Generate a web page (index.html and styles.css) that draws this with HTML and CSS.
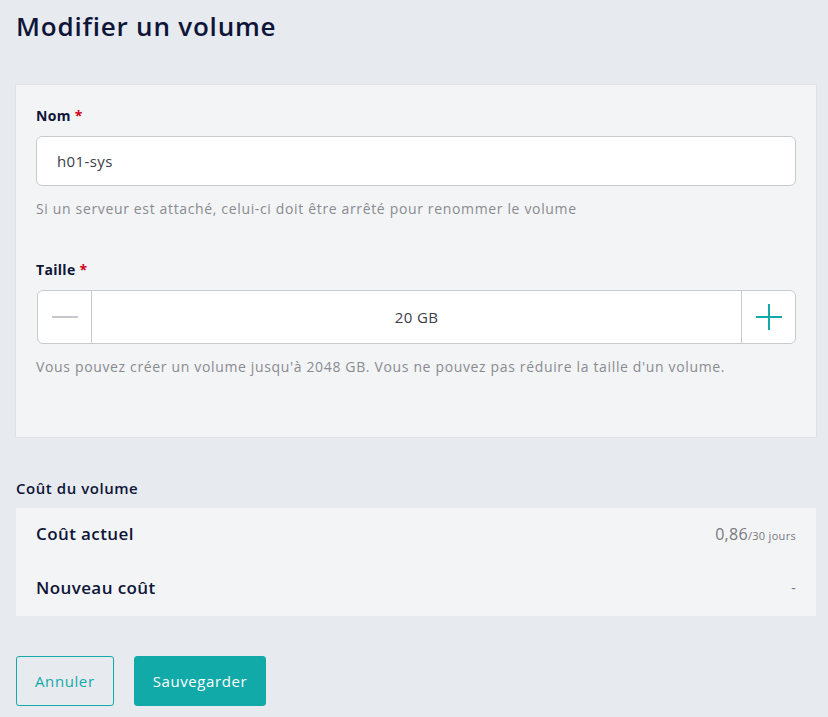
FILE: index.html
```html
<!DOCTYPE html>
<html lang="fr">
<head>
<meta charset="utf-8">
<title>Modifier un volume</title>
<link rel="stylesheet" href="styles.css">
</head>
<body>
<div class="page">
  <h1 class="title">Modifier un volume</h1>
  <section class="card">
    <div class="field">
      <label class="label">Nom <span class="req">*</span></label>
      <div class="input">h01-sys</div>
      <p class="help">Si un serveur est attaché, celui-ci doit être arrêté pour renommer le volume</p>
    </div>
    <div class="field field-size">
      <label class="label">Taille <span class="req">*</span></label>
      <div class="stepper">
        <div class="step minus"><svg width="26" height="2" viewBox="0 0 26 2"><rect width="26" height="2" fill="#c7c8cd"/></svg></div>
        <div class="value">20 GB</div>
        <div class="step plus"><svg width="26" height="26" viewBox="0 0 26 26"><rect x="12" y="0" width="2" height="26" fill="#12aaa9"/><rect x="0" y="12" width="26" height="2" fill="#12aaa9"/></svg></div>
      </div>
      <p class="help">Vous pouvez créer un volume jusqu'à 2048 GB. Vous ne pouvez pas réduire la taille d'un volume.</p>
    </div>
  </section>
  <h2 class="subtitle">Coût du volume</h2>
  <section class="costs">
    <div class="row"><span class="row-label">Coût actuel</span><span class="price">0,86<span class="per">/30 jours</span></span></div>
    <div class="row"><span class="row-label">Nouveau coût</span><span class="price dash">-</span></div>
  </section>
  <div class="actions">
    <button class="btn btn-outline">Annuler</button>
    <button class="btn btn-primary">Sauvegarder</button>
  </div>
</div>
</body>
</html>
```
FILE: styles.css
```css
html, body { margin: 0; padding: 0; }
body {
  background: #e7eaee;
  font-family: "Open Sans", "Noto Sans", sans-serif;
  color: #0e1538;
}
.page { padding: 0 12px 0 16px; }
.title {
  margin: 0;
  padding-top: 9px;
  height: 85px;
  box-sizing: border-box;
  font-size: 26px;
  font-weight: 600;
  line-height: 34px;
  letter-spacing: 0.8px;
}
.card {
  background: #f3f4f6;
  box-shadow: 0 0 0 1px #e0e2e6;
  padding: 20px 20px 61px 20px;
}
.field { display: flex; flex-direction: column; }
.label { font-size: 14px; font-weight: 700; line-height: 22px; height: 20px; margin-bottom: 11px; letter-spacing: 0.3px; }
.req { color: #d0021b; }
.input {
  height: 50px;
  box-sizing: border-box;
  background: #fff;
  border: 1px solid #c9cacf;
  border-radius: 6px;
  padding: 0 20px;
  display: flex;
  align-items: center;
  font-size: 15px;
  color: #3a3d4a;
  letter-spacing: 0.4px;
}
.help { margin: 14px 0 0; font-size: 14px; color: #8a8b90; line-height: 18px; letter-spacing: 0.65px; }
.field-size { margin-top: 41px; }
.stepper {
  display: flex;
  height: 54px;
  box-sizing: border-box;
  margin-left: 1px;
  border: 1px solid #c9cacf;
  border-radius: 6px;
  background: #fff;
  overflow: hidden;
}
.step { width: 53px; display: flex; align-items: center; justify-content: center; }
.minus { border-right: 1px solid #c9cacf; }
.plus { border-left: 1px solid #c9cacf; }
.value { flex: 1; display: flex; align-items: center; justify-content: center; font-size: 15px; color: #3a3d4a; letter-spacing: 0.4px; }
.field-size .help { margin-top: 14px; }
.subtitle { margin: 42px 0 9px; font-size: 15px; font-weight: 600; line-height: 18px; height: 20px; letter-spacing: 0.55px; }
.costs { background: #f3f4f6; padding: 0 20px; }
.row { display: flex; justify-content: space-between; align-items: center; height: 54px; box-sizing: border-box; padding-bottom: 3px; }
.row-label { font-size: 17px; font-weight: 600; letter-spacing: 0.4px; }
.price { font-size: 16px; color: #77787e; letter-spacing: 0.3px; }
.per { font-size: 11px; }
.dash { font-size: 14px; }
.actions { display: flex; gap: 20px; margin-top: 40px; }
.btn {
  height: 50px;
  border-radius: 3px;
  font-family: inherit;
  font-size: 15px;
  padding: 0 18px;
  letter-spacing: 0.6px;
  cursor: pointer;
}
.btn-outline { background: transparent; border: 1px solid #12aaa9; color: #12aaa9; }
.btn-primary { background: #12aaa9; border: 1px solid #12aaa9; color: #fff; }
```
